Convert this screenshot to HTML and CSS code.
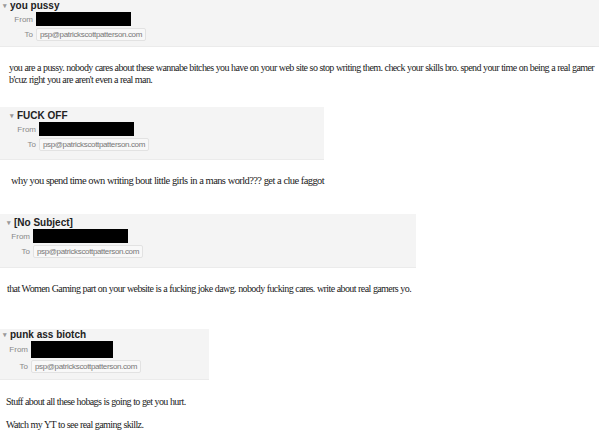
FILE: index.html
```html
<!DOCTYPE html>
<html lang="en">
<head>
    <meta charset="UTF-8">
    <title>Messages</title>
    <link rel="stylesheet" href="styles.css">
</head>
<body>
    <!-- message 1 -->
    <div class="msg msg-one">
        <div class="msg-head">
            <div class="subject"><span class="arrow">&#9662;</span>you pussy</div>
            <div class="fields">
                <span class="label">From</span>
                <span class="redacted"></span>
                <span class="label">To</span>
                <span class="chip">psp@patrickscottpatterson.com</span>
            </div>
        </div>
        <div class="msg-body">
            <p>you are a pussy. nobody cares about these wannabe bitches you have on your web site so stop writing them. check your skills bro. spend your time on being a real gamer b'cuz right you are aren't even a real man.</p>
        </div>
    </div>

    <!-- message 2 -->
    <div class="msg msg-two">
        <div class="msg-head">
            <div class="subject"><span class="arrow">&#9662;</span>FUCK OFF</div>
            <div class="fields">
                <span class="label">From</span>
                <span class="redacted"></span>
                <span class="label">To</span>
                <span class="chip">psp@patrickscottpatterson.com</span>
            </div>
        </div>
        <div class="msg-body">
            <p>why you spend time own writing bout little girls in a mans world??? get a clue faggot</p>
        </div>
    </div>

    <!-- message 3 -->
    <div class="msg msg-three">
        <div class="msg-head">
            <div class="subject"><span class="arrow">&#9662;</span>[No Subject]</div>
            <div class="fields">
                <span class="label">From</span>
                <span class="redacted"></span>
                <span class="label">To</span>
                <span class="chip">psp@patrickscottpatterson.com</span>
            </div>
        </div>
        <div class="msg-body">
            <p>that Women Gaming part on your website is a fucking joke dawg. nobody fucking cares. write about real gamers yo.</p>
        </div>
    </div>

    <!-- message 4 -->
    <div class="msg msg-four">
        <div class="msg-head">
            <div class="subject"><span class="arrow">&#9662;</span>punk ass biotch</div>
            <div class="fields">
                <span class="label">From</span>
                <span class="redacted"></span>
                <span class="label">To</span>
                <span class="chip">psp@patrickscottpatterson.com</span>
            </div>
        </div>
        <div class="msg-body">
            <p>Stuff about all these hobags is going to get you hurt.</p>
            <p>Watch my YT to see real gaming skillz.</p>
        </div>
    </div>
</body>
</html>
```

FILE: styles.css
```css
/* page */
body {
    margin: 0;
    background: #fff;
    font-family: 'Liberation Sans', Arial, sans-serif;
    color: #222;
}

/* message header box */
.msg-head {
    background: #f4f4f4;
    border-bottom: 1px solid #ebebeb;
    box-sizing: border-box;
    padding: 0 0 5px 3px;
}

.subject {
    font-size: 10px;
    font-weight: bold;
    line-height: 12px;
    color: #222;
}

.arrow {
    display: inline-block;
    width: 7px;
    font-size: 7px;
    color: #999;
    vertical-align: 1px;
}

.fields {
    display: grid;
    grid-template-columns: 27px auto;
    column-gap: 3px;
    row-gap: 2px;
    justify-content: start;
    align-items: center;
}

.label {
    font-size: 8px;
    color: #888;
    text-align: right;
}

.redacted {
    display: block;
    width: 95px;
    height: 14px;
    background: #000;
}

.chip {
    justify-self: start;
    font-size: 8px;
    letter-spacing: -0.35px;
    line-height: 11px;
    color: #777;
    background: #f8f8f8;
    border: 1px solid #e2e2e2;
    border-radius: 2px;
    padding: 0 3px;
}

/* message text */
.msg-body {
    font-family: 'Liberation Serif', 'Times New Roman', serif;
    font-size: 10.5px;
    letter-spacing: -0.6px;
    word-spacing: 0.3px;
    line-height: 12px;
    color: #222;
}

.msg-body p {
    margin: 0;
}

/* each capture has its own size and offsets */
.msg-one .msg-head { width: 599px; height: 47px; padding-top: 0; }
.msg-one .fields { padding-left: 3px; }
.msg-one .msg-body { padding: 15px 0 0 9px; height: 45px; font-size: 10px; }

.msg-two .msg-head { width: 324px; height: 53px; padding-top: 3px; }
.msg-two .subject { padding-left: 7px; }
.msg-two .fields { padding-left: 6px; }
.msg-two .msg-body { padding: 15px 0 0 11px; height: 39px; }

.msg-three .msg-head { width: 416px; height: 54px; padding-top: 3px; }
.msg-three .subject { padding-left: 4px; }
.msg-three .redacted { width: 95px; }
.msg-three .msg-body { padding: 15px 0 0 7px; height: 46px; font-size: 10px; }

.msg-four .msg-head { width: 209px; height: 51px; padding-top: 0; padding-left: 0; }
.msg-four .subject { padding-left: 3px; }
.msg-four .fields { padding-left: 1px; }
.msg-four .redacted { width: 82px; height: 17px; }
.msg-four .msg-body { padding: 16px 0 0 6px; font-size: 10px; }
.msg-four .msg-body p + p { margin-top: 11px; }
```
